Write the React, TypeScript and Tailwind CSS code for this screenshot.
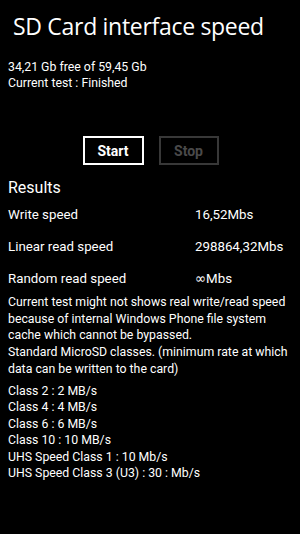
export default function App() {
  const rows = [
    { label: 'Write speed', value: '16,52Mbs' },
    { label: 'Linear read speed', value: '298864,32Mbs' },
  ]
  const classes = [
    'Class 2 : 2 MB/s',
    'Class 4 : 4 MB/s',
    'Class 6 : 6 MB/s',
    'Class 10 : 10 MB/s',
    'UHS Speed Class 1 : 10 Mb/s',
    'UHS Speed Class 3 (U3) : 30 : Mb/s',
  ]

  return (
    <div className="w-[300px] h-[534px] bg-black text-white overflow-hidden font-['Roboto',sans-serif]">
      {/* Page title */}
      <h1 className="pl-[13px] pt-[10px] text-[23px] leading-[32px] tracking-[-0.3px] font-['Open_Sans',sans-serif]">SD Card interface speed</h1>

      {/* Card info */}
      <div className="pl-2 pt-[17px] text-[12.3px] leading-[16px]">
        <div>34,21 Gb free of 59,45 Gb</div>
        <div>Current test : Finished</div>
      </div>

      {/* Buttons */}
      <div className="flex justify-center gap-[15px] pt-[45px] pl-[1px]">
        <button className="w-[61px] h-[29px] border-2 border-white text-[14px] font-bold leading-none">Start</button>
        <button className="w-[60px] h-[29px] border-2 border-[#383838] text-[#4a4a4a] text-[14px] font-bold leading-none">Stop</button>
      </div>

      {/* Results */}
      <div className="pl-2 pt-[12px]">
        <h2 className="text-[16px] leading-[22px]">Results</h2>
        <div className="text-[13.3px]">
          <div className="flex h-[32px] items-center">
            <span className="w-[187px]">{rows[0].label}</span>
            <span>{rows[0].value}</span>
          </div>
          <div className="flex h-[32px] items-center">
            <span className="w-[187px]">{rows[1].label}</span>
            <span>{rows[1].value}</span>
          </div>
          <div className="flex h-[31px] items-center">
            <span className="w-[187px]">Random read speed</span>
            <span>
              <span className="font-['Noto_Sans','DejaVu_Sans',sans-serif]">∞</span>Mbs
            </span>
          </div>
        </div>

        <p className="text-[12.3px] leading-[16.7px]">
          Current test might not shows real write/read speed because of internal Windows Phone file system cache which cannot be bypassed.
          <br />
          Standard MicroSD classes. (minimum rate at which data can be written to the card)
        </p>

        <div className="text-[12.3px] leading-[16.6px] mt-[5px]">
          {classes.map((c) => (
            <div key={c}>{c}</div>
          ))}
        </div>
      </div>
    </div>
  )
}
